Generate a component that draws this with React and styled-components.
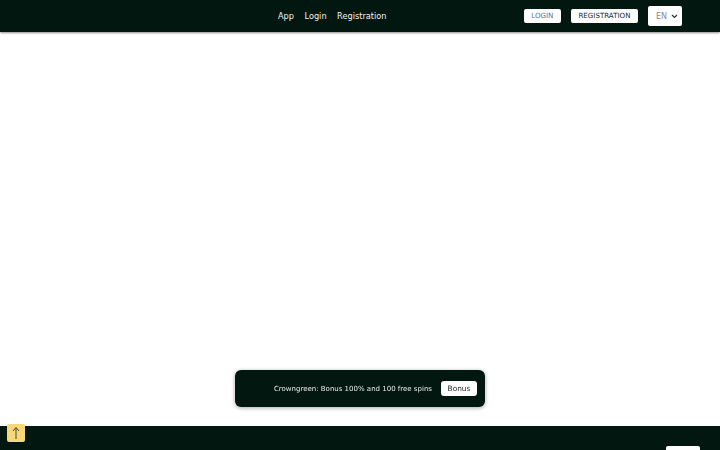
import React from "react";
import styled, { createGlobalStyle } from "styled-components";

const Global = createGlobalStyle`
  html, body { margin: 0; padding: 0; background: #fff; }
  body { font-family: "DejaVu Sans", "Liberation Sans", sans-serif; }
  * { box-sizing: border-box; }
`;

const Header = styled.header`
  height: 32px;
  background: #02170f;
  display: flex;
  align-items: center;
  position: relative;
  box-shadow: 0 1px 2px rgba(0,0,0,0.45);
  z-index: 2;
`;

const Nav = styled.nav`
  margin-left: 278px;
  display: flex;
  align-items: center;
  gap: 10.5px;
`;

const NavLink = styled.a`
  color: #f2f2f2;
  font-size: 8.2px;
  text-decoration: none;
`;

const Actions = styled.div`
  margin-left: auto;
  margin-right: 38px;
  display: flex;
  align-items: center;
  gap: 10px;
`;

const Btn = styled.button`
  height: 14px;
  padding: 0 7.5px;
  border: none;
  border-radius: 2px;
  background: #fff;
  color: ${(p) => (p.$blue ? "#4577b0" : "#1d2a25")};
  font-family: "DejaVu Sans", sans-serif;
  font-size: 7.1px;
  line-height: 14px;
  cursor: pointer;
`;

const Select = styled.div`
  width: 34px;
  height: 20px;
  background: #fff;
  border-radius: 2px;
  display: flex;
  align-items: center;
  justify-content: space-between;
  padding: 0 4px 0 8px;
  color: #8a8a8a;
  font-size: 8px;
`;

const Main = styled.main`
  height: 394px;
`;

const Footer = styled.footer`
  height: 24px;
  background: #02170f;
  position: relative;
  overflow: hidden;
`;

const FooterBtn = styled.div`
  position: absolute;
  left: 666px;
  top: 20px;
  width: 34px;
  height: 20px;
  background: #fff;
  border-radius: 2px;
`;

const BonusBar = styled.div`
  position: fixed;
  left: 235px;
  top: 370px;
  width: 250px;
  height: 37px;
  background: #02170f;
  border-radius: 6px;
  box-shadow: 0 1px 4px rgba(0,0,0,0.35);
  display: flex;
  align-items: center;
  justify-content: flex-end;
  padding-right: 8px;
  gap: 9px;
  z-index: 5;
`;

const BonusText = styled.span`
  color: #e8ece9;
  font-size: 7px;
`;

const BonusBtn = styled.button`
  height: 15px;
  width: 36px;
  border: none;
  border-radius: 3px;
  background: #fff;
  color: #1d2a25;
  font-family: "DejaVu Sans", sans-serif;
  font-size: 7.4px;
  padding: 0;
`;

const TopBtn = styled.button`
  position: fixed;
  left: 7px;
  top: 424px;
  width: 18px;
  height: 18px;
  border: none;
  border-radius: 2px;
  background: #f7d777;
  padding: 0;
  display: flex;
  align-items: center;
  justify-content: center;
  z-index: 6;
`;

export default function App() {
  return (
    <>
      <Global />
      <Header>
        <Nav>
          <NavLink href="#">App</NavLink>
          <NavLink href="#">Login</NavLink>
          <NavLink href="#">Registration</NavLink>
        </Nav>
        <Actions>
          <Btn $blue>LOGIN</Btn>
          <Btn>REGISTRATION</Btn>
          <Select>
            EN
            <svg width="7" height="5" viewBox="0 0 7 5">
              <path d="M1 1 L3.5 3.5 L6 1" stroke="#333" strokeWidth="1.2" fill="none" />
            </svg>
          </Select>
        </Actions>
      </Header>
      <Main />
      <Footer>
        <FooterBtn />
      </Footer>
      <BonusBar>
        <BonusText>Crowngreen: Bonus 100% and 100 free spins</BonusText>
        <BonusBtn>Bonus</BonusBtn>
      </BonusBar>
      <TopBtn aria-label="Top">
        <svg width="10" height="14" viewBox="0 0 10 14">
          <path d="M5 13 V2 M2 5 L5 1.5 L8 5" stroke="#3a3a2a" strokeWidth="0.9" fill="none" />
        </svg>
      </TopBtn>
    </>
  );
}
